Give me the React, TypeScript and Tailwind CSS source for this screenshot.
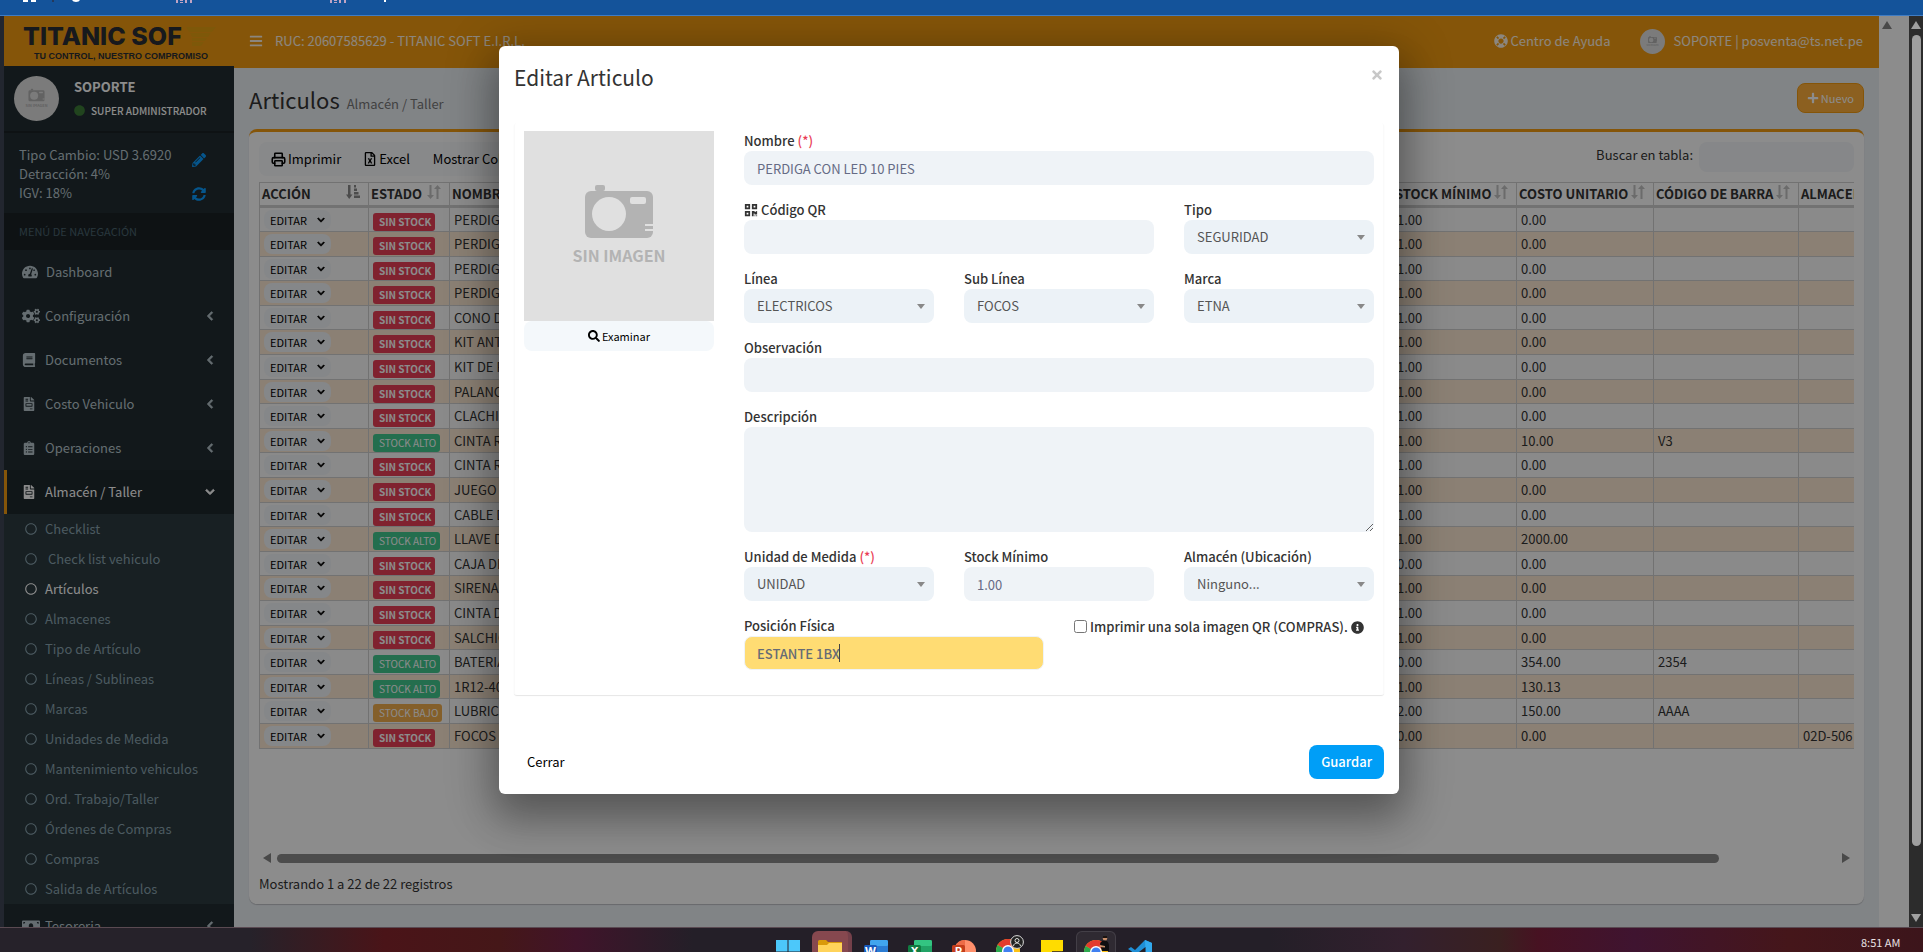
import React, { useId, useState } from "react";
import {
  FaBars, FaBook, FaCircle, FaClipboardList, FaCogs, FaFileInvoice,
  FaInfoCircle, FaLifeRing, FaMoneyBill, FaPencilAlt, FaPlus, FaQrcode, FaRegCircle,
  FaRegFileExcel, FaSearch, FaSyncAlt, FaTachometerAlt, FaTimes, FaChevronDown, FaChevronLeft,
} from "react-icons/fa";
import { Printer } from "lucide-react";
import type { IconType } from "react-icons";

type Status = "sin" | "alto" | "bajo";
type Row = { status: Status; name: string; min: string; cost: string; code?: string; store?: string };

const rows: Row[] = [
  { status: "sin", name: "PERDIGA CON LED 10 PIES", min: "1.00", cost: "0.00" },
  { status: "sin", name: "PERDIGA CON LED", min: "1.00", cost: "0.00" },
  { status: "sin", name: "PERDIGA", min: "1.00", cost: "0.00" },
  { status: "sin", name: "PERDIGA", min: "1.00", cost: "0.00" },
  { status: "sin", name: "CONO DE", min: "1.00", cost: "0.00" },
  { status: "sin", name: "KIT ANTI", min: "1.00", cost: "0.00" },
  { status: "sin", name: "KIT DE R", min: "1.00", cost: "0.00" },
  { status: "sin", name: "PALANCA", min: "1.00", cost: "0.00" },
  { status: "sin", name: "CLACHIC", min: "1.00", cost: "0.00" },
  { status: "alto", name: "CINTA R", min: "1.00", cost: "10.00", code: "V3" },
  { status: "sin", name: "CINTA R", min: "1.00", cost: "0.00" },
  { status: "sin", name: "JUEGO", min: "1.00", cost: "0.00" },
  { status: "sin", name: "CABLE DE", min: "1.00", cost: "0.00" },
  { status: "alto", name: "LLAVE DE", min: "1.00", cost: "2000.00" },
  { status: "sin", name: "CAJA DE", min: "0.00", cost: "0.00" },
  { status: "sin", name: "SIRENA", min: "1.00", cost: "0.00" },
  { status: "sin", name: "CINTA DE", min: "1.00", cost: "0.00" },
  { status: "sin", name: "SALCHIC", min: "1.00", cost: "0.00" },
  { status: "alto", name: "BATERIA", min: "0.00", cost: "354.00", code: "2354" },
  { status: "alto", name: "1R12-40", min: "1.00", cost: "130.13" },
  { status: "bajo", name: "LUBRICA", min: "2.00", cost: "150.00", code: "AAAA" },
  { status: "sin", name: "FOCOS", min: "0.00", cost: "0.00", store: "02D-506" },
];

const badges: Record<Status, { text: string; cls: string }> = {
  sin: { text: "SIN STOCK", cls: "bg-[#e93e56] font-bold" },
  alto: { text: "STOCK ALTO", cls: "bg-[#42c88f]" },
  bajo: { text: "STOCK BAJO", cls: "bg-[#f0ad4e]" },
};

const menu: { icon: IconType; text: string; wide?: boolean }[] = [
  { icon: FaCogs, text: "Configuración", wide: true },
  { icon: FaBook, text: "Documentos" },
  { icon: FaFileInvoice, text: "Costo Vehiculo" },
  { icon: FaClipboardList, text: "Operaciones" },
];

const submenu = [
  "Checklist", "\u00a0Check list vehiculo", "Artículos", "Almacenes", "Tipo de Artículo",
  "Líneas / Sublineas", "Marcas", "Unidades de Medida", "Mantenimiento vehiculos",
  "Ord. Trabajo/Taller", "Órdenes de Compras", "Compras", "Salida de Artículos",
];

function Camera({ className }: { className: string }) {
  return (
    <svg viewBox="0 0 190 190" className={className} aria-hidden="true">
      <rect width="190" height="190" fill="#e0e0e0" />
      <rect x="71" y="54" width="10" height="6" rx="2" fill="#b3b3b3" />
      <rect x="61" y="60" width="68" height="47" rx="6" fill="#b3b3b3" />
      <circle cx="85" cy="83" r="17" fill="#e0e0e0" />
      <rect x="106" y="66" width="16" height="7" rx="2" fill="#e0e0e0" />
      <path d="M121 93h8v2h-8zM121 98h8v2h-8z" fill="#e0e0e0" />
      <text x="95" y="131" textAnchor="middle" fontSize="16" fontWeight="700" fontFamily="'Noto Sans CJK SC', sans-serif" fill="#b3b3b3">
        SIN IMAGEN
      </text>
    </svg>
  );
}

function SortIcon() {
  return (
    <svg viewBox="0 0 14 16" className="-mt-1 h-4 w-3.5 text-[#c4c4c4]" fill="currentColor" aria-hidden="true">
      <path d="M2.5 1h2v10H7l-3.500 4L0 11h2.500zM9.500 15h2V5H14l-3.500-4L7 5h2.500z" />
    </svg>
  );
}

function SortedIcon() {
  return (
    <svg viewBox="0 0 14 14" className="-mt-1 size-3.5 text-[#8a8a8a]" fill="currentColor" aria-hidden="true">
      <path d="M2 0h2.500v9.500H6.500L3.200 14 0 9.500h2zM8 0h2v2.500H8zM8 3.500h3V6H8zM8 7h4.500v2.500H8zM8 10.500h6V13H8z" />
    </svg>
  );
}

function Sidebar() {
  return (
    <aside className="flex w-[230px] shrink-0 flex-col overflow-hidden bg-[#222d32] text-[#b8c7ce]">
      <div className="flex h-[50px] shrink-0 flex-col bg-[#f39c12] pt-1.5 pl-[19px] text-[#2b2e35]">
        <div className="flex items-center gap-1">
          <span className="font-[Inter,sans-serif] text-[25px] leading-7 font-extrabold whitespace-nowrap">TITANIC SOF</span>
          <svg viewBox="0 0 30 19" className="h-[19px] w-[30px] shrink-0" fill="#e5a012" aria-hidden="true">
            <path d="M0 0h30l-4 5H3zM4 6h21l-3 4H6zM6 11h15l-2 3H6zM6 15h12l-3 4H6z" />
          </svg>
        </div>
        <span className="pl-[11px] font-['Liberation_Sans',sans-serif] text-[9px] leading-3 font-bold whitespace-nowrap">TU CONTROL, NUESTRO COMPROMISO</span>
      </div>
      <div className="flex h-[67px] shrink-0 items-center border-b-2 border-[#1a2226] pl-2.5">
        <Camera className="size-[45px] rounded-full" />
        <div className="ml-[15px] flex flex-col gap-1 leading-5 text-white">
          <span className="text-[13px] font-bold">SOPORTE</span>
          <a href="#estado" className="flex items-center gap-1.5 text-[10px] font-medium"><FaCircle className="size-[11px] text-[#3c7d38]" />SUPER ADMINISTRADOR</a>
        </div>
      </div>
      <div className="flex h-20 shrink-0 justify-between pt-3 pr-7 pl-[15px] text-[13px] leading-[19px]">
        <div>Tipo Cambio: USD 3.6920<br />Detracción: 4%<br />IGV: 18%</div>
        <div className="flex flex-col gap-5 pt-2 text-[#0a9cff]">
          <button aria-label="Editar tipo de cambio"><FaPencilAlt className="size-3.5" /></button>
          <button aria-label="Actualizar"><FaSyncAlt className="size-3.5" /></button>
        </div>
      </div>
      <div className="flex h-[37px] shrink-0 items-center bg-[#1a2226] pl-[15px] text-[11px] text-[#4b646f]">MENÚ DE NAVEGACIÓN</div>
      <nav className="flex flex-col text-[13px]">
        <a href="#dashboard" className="flex h-11 items-center gap-2 pl-[18px]"><FaTachometerAlt className="size-4" />Dashboard</a>
        {menu.map(({ icon: Icon, text, wide }) => (
          <a key={text} href="#menu" className="flex h-11 items-center pr-[19px] pl-[18px]">
            <span className="w-[23px]"><Icon className={wide ? "size-[18px]" : "size-3.5"} /></span>
            <span className="flex-1">{text}</span>
            <FaChevronLeft className="size-2.5" stroke="currentColor" strokeWidth={40} />
          </a>
        ))}
        <a href="#almacen" className="flex h-11 items-center border-l-[3px] border-[#f39c12] bg-[#1e282c] pr-[19px] pl-[15px] text-white">
          <span className="w-[23px]"><FaFileInvoice className="size-3.5" /></span>
          <span className="flex-1">Almacén / Taller</span>
          <FaChevronDown className="size-2.5" stroke="currentColor" strokeWidth={40} />
        </a>
        <ul className="bg-[#2c3b41] text-[#8aa4af]">
          {submenu.map((text) => (
            <li key={text}>
              <a href="#submenu" className={text === "Artículos" ? "flex h-[30px] items-center gap-2 pl-[21px] text-white" : "flex h-[30px] items-center gap-2 pl-[21px]"}>
                <FaRegCircle className="size-3" />{text}
              </a>
            </li>
          ))}
        </ul>
        <a href="#tesoreria" className="flex h-11 items-center pr-[19px] pl-[18px]">
          <span className="w-[23px]"><FaMoneyBill className="size-[18px]" /></span>
          <span className="flex-1">Tesoreria</span>
          <FaChevronLeft className="size-2.5" stroke="currentColor" strokeWidth={40} />
        </a>
      </nav>
    </aside>
  );
}

const th = "border border-t border-[#d0d0d0] border-b-[3px] p-0 pl-0.5 text-left font-bold whitespace-nowrap";
const td = "border border-[#d0d0d0] p-0 pl-1 whitespace-nowrap overflow-hidden";

function ArticleTable() {
  return (
    <table className="w-[calc(100%+60px)] table-fixed border-collapse text-[13px] leading-5 text-[#333]">
      <colgroup>
        <col className="w-[109px]" /><col className="w-[81px]" /><col /><col className="w-[124px]" />
        <col className="w-[137px]" /><col className="w-[145px]" /><col className="w-[115px]" />
      </colgroup>
      <thead>
        <tr className="h-6">
          <th className={th}><span className="flex items-center justify-between pr-2">ACCIÓN <SortedIcon /></span></th>
          {["ESTADO", "NOMBRE", "STOCK MÍNIMO", "COSTO UNITARIO", "CÓDIGO DE BARRA", "ALMACEN"].map((h) => (
            <th key={h} className={th}><span className="flex items-center justify-between pr-2">{h} <SortIcon /></span></th>
          ))}
        </tr>
      </thead>
      <tbody>
        {rows.map((r, i) => (
          <tr key={i} className="h-[25px] bg-[#fbfbfb] even:bg-[#fde9d3] nth-[5n+3]:h-6 nth-[5n+5]:h-6">
            <td className={td}>
              <button className="flex h-5 w-[67px] items-center justify-between rounded-lg bg-[#f3f6f9] px-1.5 text-[11px] text-black">EDITAR <FaChevronDown className="size-2" stroke="currentColor" strokeWidth={40} /></button>
            </td>
            <td className={td}>
              <span className={"mt-1 block h-[18px] w-fit rounded-[3px] pr-1 pl-1.5 text-[10px] leading-[17px] text-white " + badges[r.status].cls}>{badges[r.status].text}</span>
            </td>
            <td className={td}>{r.name}</td>
            <td className={td}>{r.min}</td>
            <td className={td}>{r.cost}</td>
            <td className={td}>{r.code}</td>
            <td className={td}>{r.store}</td>
          </tr>
        ))}
      </tbody>
    </table>
  );
}

function Page() {
  return (
    <div className="flex min-w-0 flex-1 flex-col bg-[#ecf0f5]">
      <header className="flex h-[52px] shrink-0 items-center bg-[#f39c12] pr-4 pb-0.5 pl-[15px] text-[13px] text-white/90">
        <button aria-label="Menú"><FaBars className="size-3.5" /></button>
        <span className="ml-3 flex-1">RUC: 20607585629 - TITANIC SOFT E.I.R.L.</span>
        <a href="#ayuda" className="flex items-center gap-0.5"><FaLifeRing className="size-3.5" />Centro de Ayuda</a>
        <a href="#perfil" className="ml-[30px] flex items-center gap-2"><Camera className="size-[25px] rounded-full" />SOPORTE | posventa@ts.net.pe</a>
      </header>
      <main className="flex min-h-0 flex-1 flex-col pt-[15px] pr-[15px] pb-[23px] pl-[15px]">
        <div className="flex h-[46px] shrink-0 items-start justify-between">
          <h1 className="text-[22px] leading-8 text-[#333]">Articulos <small className="ml-0.5 text-[13px] text-[#777]">Almacén / Taller</small></h1>
          <button className="flex h-[30px] items-center gap-0.5 rounded-lg border border-[#f39c12] bg-[#ffb03b] px-[9px] text-[11px] text-white"><FaPlus className="size-3" />Nuevo</button>
        </div>
        <section className="flex min-h-0 flex-1 flex-col rounded-lg border-t-[3px] border-[#f39c12] bg-white px-2.5 pt-2.5 shadow-[0_1px_1px_rgba(0,0,0,0.2)]">
          <div className="flex h-10 shrink-0 items-start justify-between text-[13px]">
            <div className="flex h-[34px] items-center rounded-lg bg-[#f7f9fb] text-black">
              <button className="flex h-full items-center gap-0.5 pr-[11px] pl-3"><Printer className="size-[15px]" strokeWidth={2.5} />Imprimir</button>
              <button className="flex h-full items-center gap-0.5 px-[11px]"><FaRegFileExcel className="size-3.5" />Excel</button>
              <button className="h-full px-3">Mostrar Columnas</button>
            </div>
            <label className="flex items-center gap-1.5 text-[#333]"><span className="-mt-1">Buscar en tabla:</span>
              <input type="search" className="h-[30px] w-[155px] rounded-lg bg-[#f4f6f9] px-3" />
            </label>
          </div>
          <div className="min-h-0 flex-1 overflow-hidden"><ArticleTable /></div>
          <div className="flex h-4 shrink-0 items-center px-1 text-[#858585]">
            <svg viewBox="0 0 8 10" className="h-2.5 w-2" fill="currentColor" aria-hidden="true"><path d="M8 0v10L0 5z" /></svg>
            <div className="ml-1.5 h-[9px] flex-1 rounded-full bg-[#8b8b8b]" />
            <div className="w-[123px] shrink-0" />
            <svg viewBox="0 0 8 10" className="h-2.5 w-2" fill="currentColor" aria-hidden="true"><path d="M0 0v10l8-5z" /></svg>
          </div>
          <p className="h-[38px] shrink-0 pt-2 text-[13px] leading-5 text-[#333]">Mostrando 1 a 22 de 22 registros</p>
        </section>
      </main>
    </div>
  );
}

const field = "h-[34px] w-full rounded-lg bg-[#eff3f7] px-[13px] text-[13px] text-[#666b85] outline-none";

function Field({ label, span = "", children }: { label: React.ReactNode; span?: string; children: (id: string) => React.ReactNode }) {
  const id = useId();
  return (
    <div className={"flex flex-col " + span}>
      <label htmlFor={id} className="flex h-5 items-center gap-[3px] text-[13px] font-medium">{label}</label>
      {children(id)}
    </div>
  );
}

function SelectField({ label, value }: { label: React.ReactNode; value: string }) {
  return (
    <Field label={label} span="col-span-2">
      {(id) => (
        <div className="grid items-center">
          <select id={id} className="col-start-1 row-start-1 h-[34px] w-full appearance-none rounded-lg bg-[#ecf2f7] px-[13px] text-[13px] text-[#555]"><option>{value}</option></select>
          <svg viewBox="0 0 8 5" className="pointer-events-none col-start-1 row-start-1 mr-[9px] h-[5px] w-2 justify-self-end" fill="#888" aria-hidden="true"><path d="M0 0h8L4 5z" /></svg>
        </div>
      )}
    </Field>
  );
}

const required = <span className="text-[#e93e56]">(*)</span>;

function EditModal() {
  const [place, setPlace] = useState("ESTANTE 1BX");
  return (
    <div role="dialog" aria-label="Editar Articulo" className="mx-auto mt-[30px] flex w-[900px] max-w-full flex-col self-start rounded-md bg-white px-[15px] pb-[15px] text-[#333] shadow-[0_9px_46px_8px_rgba(0,0,0,0.25),0_24px_38px_3px_rgba(0,0,0,0.2)]">
      <div className="flex h-[77px] items-start justify-between pt-[15px]">
        <h2 className="text-[21px] leading-8">Editar Articulo</h2>
        <button aria-label="Cerrar ventana" className="mt-[7px] text-[#c8c8c8]"><FaTimes className="size-3.5" /></button>
      </div>
      <div className="flex gap-[30px] rounded-[3px] border-x border-[#fafafa] px-[9px] pt-2 pb-[25px] shadow-[0_1px_1px_rgba(0,0,0,0.1)]">
        <div className="w-[190px] shrink-0">
          <Camera className="block size-[190px]" />
          <button className="flex h-[30px] w-full items-center justify-center gap-0.5 rounded-lg bg-[#f4f8fb] text-[11px] text-black"><FaSearch className="size-3" />Examinar</button>
        </div>
        <form className="grid flex-1 grid-cols-6 gap-x-[30px] gap-y-[15px]">
          <Field label={<>Nombre {required}</>} span="col-span-6">{(id) => <input id={id} className={field} defaultValue="PERDIGA CON LED 10 PIES" />}</Field>
          <Field label={<><FaQrcode className="size-3.5" />Código QR</>} span="col-span-4">{(id) => <input id={id} className={field} />}</Field>
          <SelectField label="Tipo" value="SEGURIDAD" />
          <SelectField label="Línea" value="ELECTRICOS" />
          <SelectField label="Sub Línea" value="FOCOS" />
          <SelectField label="Marca" value="ETNA" />
          <Field label="Observación" span="col-span-6">{(id) => <input id={id} className={field} />}</Field>
          <Field label="Descripción" span="col-span-6">{(id) => <textarea id={id} className="h-[105px] w-full resize-y rounded-lg bg-[#eff3f7] px-[13px] py-1.5 text-[13px] outline-none" />}</Field>
          <SelectField label={<>Unidad de Medida {required}</>} value="UNIDAD" />
          <Field label="Stock Mínimo" span="col-span-2">{(id) => <input id={id} className={field} defaultValue="1.00" />}</Field>
          <SelectField label="Almacén (Ubicación)" value="Ninguno..." />
          <Field label="Posición Física" span="col-span-3">
            {(id) => (
              <div className="grid items-center">
                <input id={id} value={place} onChange={(e) => setPlace(e.target.value)} className="col-start-1 row-start-1 h-[34px] w-full rounded-lg border border-[#eff3f7] bg-[#ffdc73] px-3 text-[13px] font-medium text-[#666b75] outline-none" />
                <span className="pointer-events-none col-start-1 row-start-1 ml-[95px] h-[18px] w-px bg-[#444]" />
              </div>
            )}
          </Field>
          <label className="col-span-3 flex h-[22px] items-center gap-[3px] text-[13px] font-medium whitespace-nowrap">
            <input type="checkbox" className="-mt-0.5 size-[13px]" />Imprimir una sola imagen QR (COMPRAS). <FaInfoCircle className="size-[13px]" />
          </label>
        </form>
      </div>
      <div className="flex items-center justify-between pt-[50px] pl-[13px]">
        <button className="text-[13px] text-black">Cerrar</button>
        <button className="h-[34px] rounded-lg bg-[#009ef7] px-3 text-[13px] font-medium text-white">Guardar</button>
      </div>
    </div>
  );
}

function Chrome() {
  return (
    <svg viewBox="0 0 24 24" className="size-6" aria-hidden="true">
      <circle cx="12" cy="12" r="12" fill="#fbc116" />
      <path d="M12 12 1.600 6A12 12 0 0 1 22.400 6z" fill="#e33b2e" />
      <path d="M12 12 1.600 6a12 12 0 0 0 9 18z" fill="#2da94f" />
      <circle cx="12" cy="12" r="6" fill="#fff" /><circle cx="12" cy="12" r="4.600" fill="#3f7ff0" />
    </svg>
  );
}

function Office({ letter, dark, light, mid }: { letter: string; dark: string; light: string; mid: string }) {
  return (
    <svg viewBox="0 0 24 24" className="size-6" aria-hidden="true">
      <rect x="6" width="18" height="22" rx="1.500" fill={mid} /><rect x="6" width="18" height="6" rx="1.500" fill={light} />
      <rect y="5" width="13" height="13" rx="1.500" fill={dark} />
      <text x="6.500" y="15" textAnchor="middle" fontSize="11" fontWeight="700" fontFamily="Inter, sans-serif" fill="#fff">{letter}</text>
    </svg>
  );
}

function Taskbar() {
  return (
    <footer className="flex h-[25px] shrink-0 items-start justify-between overflow-hidden border-t border-[#5a4a52] bg-[linear-gradient(90deg,#26222a_0%,#26222a_13%,#4a1418_20%,#451718_26%,#40142a_30%,#241f28_36%,#241f28_66%,#33202e_73%,#3a2020_78%,#471222_80%,#3f1430_85%,#45161a_93%,#3c151b_100%)]">
      <span className="w-[67px]" />
      <div className="flex items-start gap-5 pt-3">
        <svg viewBox="0 0 24 24" className="size-6" fill="#4cc8fa" aria-hidden="true"><path d="M0 0h11.500v11.500H0zM12.500 0H24v11.500H12.500zM0 12.500h11.500V24H0zM12.500 12.500H24V24H12.500z" /></svg>
        <div className="-mx-2 -mt-[9px] flex h-10 w-10 justify-center rounded-md border-r-4 border-[#74404a] bg-[#86484f] pt-[9px]">
          <svg viewBox="0 0 24 24" className="size-6 shrink-0" aria-hidden="true"><path d="M0 1.500Q0 0 1.500 0H8l2 2H24v8H0z" fill="#d99a0b" /><path d="M0 5h9l2-2h13v21H0z" fill="#ffd35a" /></svg>
        </div>
        <Office letter="W" dark="#185abd" mid="#2b7cd3" light="#41a5ee" />
        <Office letter="X" dark="#107c41" mid="#21a366" light="#33c481" />
        <svg viewBox="0 0 24 24" className="size-6" aria-hidden="true">
          <circle cx="13" cy="11" r="11" fill="#ff8f6b" /><path d="M13 0v11H2A11 11 0 0 1 13 0z" fill="#ed6c47" /><rect y="5" width="13" height="13" rx="1.500" fill="#c43e1c" />
          <text x="6.500" y="15" textAnchor="middle" fontSize="11" fontWeight="700" fontFamily="Inter, sans-serif" fill="#fff">P</text>
        </svg>
        <div className="relative -mt-px">
          <Chrome />
          <svg viewBox="0 0 14 14" className="absolute -top-1 -right-1 size-3.5" aria-hidden="true"><circle cx="7" cy="7" r="6.400" fill="#222" stroke="#ddd" /><circle cx="7" cy="5.500" r="2" fill="none" stroke="#ddd" /><path d="M3.500 11c.5-4 6.500-4 7 0" fill="none" stroke="#ddd" /></svg>
        </div>
        <svg viewBox="0 0 24 24" className="size-6" aria-hidden="true"><path d="M1 0h22v11H12v13H1z" fill="#ffdc00" /><path d="M12 11h11L12 24z" fill="#5b4a1c" /></svg>
        <div className="relative -mx-2 -mt-[9px] flex h-10 w-10 justify-center rounded-md border border-white/10 bg-white/5 pt-2">
          <Chrome />
          <svg viewBox="0 0 10 15" className="absolute top-1 right-1.5 h-[15px] w-2.5" aria-hidden="true"><circle cx="6" cy="2.500" r="2.200" fill="#c98f6a" /><path d="M4 0h4v2H4z" fill="#1a1310" /><path d="M1 8q1-4 5-3.500 4 .5 4 6V15H3z" fill="#0e0e10" /><path d="M1 9l5 1v1.500L0 11z" fill="#c98f6a" /></svg>
        </div>
        <svg viewBox="0 0 24 24" className="size-6" aria-hidden="true"><path d="M17 0l7 3v18l-7 3L7 14l-4 3-3-2 4-3.500L0 9l3-2 4 3z" fill="#1f8fd6" /><path d="M17 0l7 3v18l-6 2z" fill="#32a9ee" /><path d="M17.500 7v10L11 12z" fill="#241f28" /></svg>
      </div>
      <time className="w-[62px] pt-1 text-[11px] leading-5 text-[#e8e0e2]">8:51 AM</time>
    </footer>
  );
}

function ScrollArrow({ up = false, fill }: { up?: boolean; fill: string }) {
  return <svg viewBox="0 0 10 8" className="h-2 w-2.5" fill={fill} aria-hidden="true"><path d={up ? "M5 0l5 8H0z" : "M0 0h10L5 8z"} /></svg>;
}

export default function App() {
  return (
    <div className="flex h-screen w-full flex-col overflow-hidden bg-[#22262f] font-['Noto_Sans_CJK_SC',sans-serif]">
      <div className="h-4 shrink-0 overflow-hidden border-b border-[#3f7cc4] bg-[#14539a] pl-[22px]">
        <svg viewBox="0 0 400 4" className="h-1 w-[400px]" aria-hidden="true">
          <path d="M1 0h5v2H1zM9 0h5v2H9zM50 0h8q-1 2-4 2t-4-2zM362 0h2v2h-2z" fill="#fff" /><path d="M30 0h2v2h-2z" fill="#24395c" /><path d="M154 0h2v3h-2zM158 0h3v1h-3zM158 2h3v1h-3zM163 0h2v3h-2zM168 0h2v3h-2zM308 0h2v3h-2zM312 0h3v1h-3zM312 2h3v1h-3zM317 0h2v3h-2zM322 0h2v3h-2z" fill="#c0a4c4" />
        </svg>
      </div>
      <div className="flex min-h-0 flex-1 pl-1">
        <div className="relative flex min-w-0 flex-1 bg-white">
          <Sidebar />
          <Page />
          <div className="flex w-[30px] shrink-0 flex-col pt-[5px] pl-[3px]"><ScrollArrow up fill="#858585" /></div>
          <div className="absolute inset-0 flex overflow-hidden bg-black/45 pr-[15px]"><EditModal /></div>
        </div>
        <div className="flex w-3.5 shrink-0 flex-col items-center gap-1.5 bg-[#2c2c2c] py-[5px]">
          <ScrollArrow up fill="#a0a0a0" />
          <div className="w-[9px] flex-1 rounded-full bg-[#9f9f9f]" />
          <div className="h-14 shrink-0" />
          <ScrollArrow fill="#a0a0a0" />
        </div>
      </div>
      <Taskbar />
    </div>
  );
}
